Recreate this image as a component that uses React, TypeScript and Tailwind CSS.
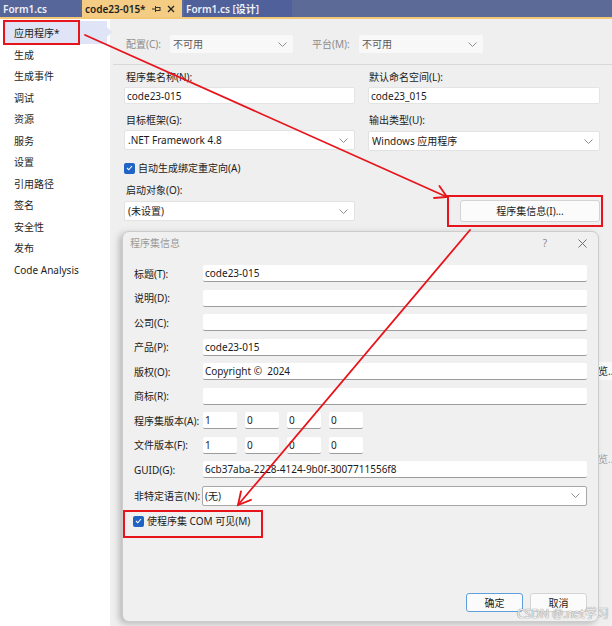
import React from "react";

function Chevron() {
  return (
    <svg width="9" height="5" viewBox="0 0 9 5" className="shrink-0">
      <polyline points="0.5,0.5 4.5,4.5 8.5,0.5" fill="none" stroke="#8f8f8f" strokeWidth="1" />
    </svg>
  );
}

function Select({ children, className = "", disabled = false }: { children?: React.ReactNode; className?: string; disabled?: boolean }) {
  return (
    <div
      className={
        "flex items-center pl-[3px] pr-[6px] rounded-[2px] " +
        (disabled ? "bg-[#f8f8f8] text-[#5a5a5a] " : "bg-white border border-[#e2e2e2] text-[#1b1b1b] ") +
        className
      }
    >
      <span className="flex-1 truncate">{children}</span>
      <Chevron />
    </div>
  );
}

function Input({ children, className = "" }: { children?: React.ReactNode; className?: string }) {
  return (
    <div className={"flex items-center pl-[2px] bg-white border border-[#e4e4e4] rounded-[2px] text-[#1b1b1b] " + className}>
      {children}
    </div>
  );
}

function DInput({ children, className = "" }: { children?: React.ReactNode; className?: string }) {
  return (
    <div className={"flex h-[17px] items-center pl-[2px] bg-white border-b border-[#9c9c9c] rounded-[2px] text-[#1b1b1b] " + className}>
      {children}
    </div>
  );
}

function Check() {
  return (
    <div className="flex h-[11px] w-[11px] shrink-0 items-center justify-center rounded-[2px] bg-[#1f63c4]">
      <svg width="7" height="6" viewBox="0 0 7 6">
        <polyline points="1,3 2.8,4.8 6,1" fill="none" stroke="white" strokeWidth="1.1" />
      </svg>
    </div>
  );
}

function DRow({ label, children }: { label: string; children: React.ReactNode }) {
  return (
    <div className="flex h-[17px] items-center">
      <span className="w-[69px] shrink-0 whitespace-nowrap text-[#1b1b1b]">{label}</span>
      <div className="flex flex-1 gap-[8px]">{children}</div>
    </div>
  );
}

const sideItems = ["生成", "生成事件", "调试", "资源", "服务", "设置", "引用路径", "签名", "安全性", "发布", "Code Analysis"];

export default function App() {
  return (
    <div className="relative h-[626px] w-[612px] overflow-hidden bg-[#efefef] font-['Noto_Sans','Noto_Sans_CJK_SC',sans-serif] text-[10px] leading-[14px]">
      {/* tab bar */}
      <div className="flex h-[17px] bg-[#5b6a96] text-[10px] font-semibold">
        <div className="flex w-[80px] items-center bg-[#56659a] pl-[3px] text-[#eef0f6]">Form1.cs</div>
        <div className="ml-[2px] flex w-[100px] items-center bg-[#f5cc84] pl-[3px] text-[#1e1e1e]">
          <span className="w-[62px]">code23-015*</span>
          <svg width="9" height="8" viewBox="0 0 9 8" className="ml-[5px]">
            <line x1="0" y1="4" x2="3" y2="4" stroke="#333" strokeWidth="1" />
            <line x1="3.5" y1="1" x2="3.5" y2="7" stroke="#333" strokeWidth="1" />
            <rect x="3.5" y="2.5" width="4.5" height="3" fill="none" stroke="#333" strokeWidth="1" />
          </svg>
          <svg width="8" height="8" viewBox="0 0 8 8" className="ml-[6px]">
            <line x1="1" y1="1" x2="7" y2="7" stroke="#222" strokeWidth="1.2" />
            <line x1="7" y1="1" x2="1" y2="7" stroke="#222" strokeWidth="1.2" />
          </svg>
        </div>
        <div className="ml-[2px] flex w-[108px] items-center bg-[#50609a] pl-[2px] text-[#eef0f6]">Form1.cs [设计]</div>
      </div>
      <div className="h-[2px] bg-[#f3c978]" />

      <div className="flex h-[607px]">
        {/* sidebar */}
        <div className="w-[110px] shrink-0 bg-white pt-[2px] text-[#1e1e1e]">
          <div className="relative ml-[3px] flex h-[23px] w-[104px] items-center bg-[#dfe5f6] pl-[11px]">
            应用程序*
            <svg width="5" height="10" viewBox="0 0 5 10" className="absolute -right-[5px] top-[6px]">
              <polygon points="0,0 5,5 0,10" fill="#dfe5f6" />
            </svg>
          </div>
          {sideItems.map((s) => (
            <div key={s} className="flex h-[21.5px] items-center pl-[14px]">
              {s}
            </div>
          ))}
        </div>

        {/* main */}
        <div className="relative flex-1 pt-[16px]">
          <div className="flex h-[18px] items-center pl-[16px] text-[#8c8c8c]">
            <span className="w-[44px]">配置(C):</span>
            <Select disabled className="h-[18px] w-[123px]">不可用</Select>
            <span className="ml-[19px] w-[47px]">平台(M):</span>
            <Select disabled className="h-[18px] w-[124px]">不可用</Select>
          </div>
          <div className="ml-[3px] mt-[11px] h-px bg-[#d8d8d8]" />
          <div className="flex gap-[13px] pl-[14px] text-[#1b1b1b]">
            <div className="flex w-[231px] flex-col pt-[5px]">
              <span className="h-[14px] pl-[2px]">程序集名称(N):</span>
              <Input className="mt-[3px] h-[17px]">code23-015</Input>
              <span className="mt-[9px] h-[14px] pl-[2px]">目标框架(G):</span>
              <Select className="mt-[3px] h-[20px]">.NET Framework 4.8</Select>
              <div className="mt-[11px] flex h-[14px] items-center gap-[3px]">
                <Check />
                <span>自动生成绑定重定向(A)</span>
              </div>
              <span className="mt-[8px] h-[14px] pl-[2px]">启动对象(O):</span>
              <Select className="mt-[4px] h-[20px]">(未设置)</Select>
            </div>
            <div className="flex w-[232px] flex-col pt-[5px]">
              <span className="h-[14px] pl-[1px]">默认命名空间(L):</span>
              <Input className="mt-[3px] h-[17px]">code23_015</Input>
              <span className="mt-[9px] h-[14px] pl-[1px]">输出类型(U):</span>
              <Select className="mt-[4px] h-[20px]">Windows 应用程序</Select>
              <div className="ml-[92px] mt-[49px] flex h-[22px] w-[140px] items-center justify-center rounded-[3px] border border-[#d3d3d3] bg-[#fbfbfb]">
                程序集信息(I)...
              </div>
            </div>
          </div>
          <div className="absolute left-[487px] top-[343px] flex h-[18px] items-center bg-[#f8f8f8] pl-[1px] text-[#1b1b1b]">览...</div>
          <div className="absolute left-[487px] top-[431px] flex h-[18px] items-center pl-[1px] text-[#a0a0a0]">览...</div>
        </div>
      </div>

      {/* dialog */}
      <div className="absolute left-[122px] top-[231px] flex h-[391px] w-[477px] flex-col rounded-[7px] border border-[#cccccc] bg-[#f0f0f0] shadow-[-3px_2px_6px_rgba(0,0,0,0.22)]">
        <div className="flex h-[22px] items-center pl-[7px] pr-[11px] text-[#9a9a9a]">
          <span>程序集信息</span>
          <span className="ml-auto mr-[31px] text-[#8a8a8a]">?</span>
          <svg width="9" height="9" viewBox="0 0 9 9">
            <line x1="0.5" y1="0.5" x2="8.5" y2="8.5" stroke="#707070" strokeWidth="1" />
            <line x1="8.5" y1="0.5" x2="0.5" y2="8.5" stroke="#707070" strokeWidth="1" />
          </svg>
        </div>
        <div className="flex flex-col gap-[7.5px] pl-[11px] pr-[11px] pt-[11px]">
          <DRow label="标题(T):"><DInput className="flex-1">code23-015</DInput></DRow>
          <DRow label="说明(D):"><DInput className="flex-1" /></DRow>
          <DRow label="公司(C):"><DInput className="flex-1" /></DRow>
          <DRow label="产品(P):"><DInput className="flex-1">code23-015</DInput></DRow>
          <DRow label="版权(O):"><DInput className="flex-1">Copyright ©&nbsp; 2024</DInput></DRow>
          <DRow label="商标(R):"><DInput className="flex-1" /></DRow>
          <DRow label="程序集版本(A):">
            <DInput className="w-[34px]">1</DInput>
            <DInput className="w-[34px]">0</DInput>
            <DInput className="w-[34px]">0</DInput>
            <DInput className="w-[34px]">0</DInput>
          </DRow>
          <DRow label="文件版本(F):">
            <DInput className="w-[34px]">1</DInput>
            <DInput className="w-[34px]">0</DInput>
            <DInput className="w-[34px]">0</DInput>
            <DInput className="w-[34px]">0</DInput>
          </DRow>
          <DRow label="GUID(G):"><DInput className="flex-1">6cb37aba-2228-4124-9b0f-3007711556f8</DInput></DRow>
          <div className="flex h-[20px] items-center">
            <span className="w-[68px] shrink-0 whitespace-nowrap text-[#1b1b1b]">非特定语言(N):</span>
            <div className="flex h-[20px] flex-1 items-center rounded-[2px] border border-[#a8a8a8] bg-white pl-[2px] pr-[6px] text-[#1b1b1b]">
              <span className="flex-1">(无)</span>
              <Chevron />
            </div>
          </div>
        </div>
        <div className="mt-[8.5px] flex h-[14px] items-center gap-[3px] pl-[10px] text-[#1b1b1b]">
          <Check />
          <span>使程序集 COM 可见(M)</span>
        </div>
        <div className="flex-1" />
        <div className="flex justify-end gap-[7px] pb-[9px] pr-[11px] text-[#1b1b1b]">
          <div className="flex h-[19px] w-[57px] items-center justify-center rounded-[3px] border-[1.5px] border-[#5f9fdc] bg-[#fbfbfb]">确定</div>
          <div className="flex h-[19px] w-[57px] items-center justify-center rounded-[3px] border border-[#d4d4d4] bg-[#fbfbfb]">取消</div>
        </div>
      </div>

      {/* annotations */}
      <div className="pointer-events-none absolute left-[3px] top-[20px] h-[25px] w-[77px] border-2 border-[#e8141b]" />
      <div className="pointer-events-none absolute left-[447px] top-[195px] h-[32px] w-[156px] border-2 border-[#e8141b]" />
      <div className="pointer-events-none absolute left-[123px] top-[510px] h-[28px] w-[140px] border-2 border-[#e8141b]" />
      <svg className="pointer-events-none absolute left-0 top-0" width="612" height="626" viewBox="0 0 612 626">
        <g stroke="#e8141b" strokeWidth="1.8" fill="none" strokeLinecap="round">
          <line x1="85" y1="35" x2="447" y2="197" />
          <polyline points="439.4,186 447,197 434,198" />
          <line x1="470" y1="230" x2="238" y2="505" />
          <polyline points="251,499.8 238,505 241,491.3" />
        </g>
      </svg>
      <div className="pointer-events-none absolute left-[517px] top-[607px] text-[12px] leading-[14px] text-[#efefef] [text-shadow:0_0_1px_#8a8a8a,0_0_1px_#8a8a8a]">
        CSDN @.net学习
      </div>
    </div>
  );
}
